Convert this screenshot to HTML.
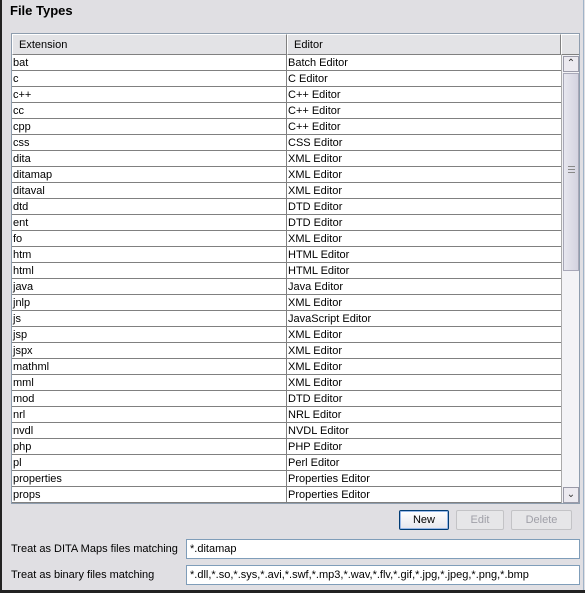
<!DOCTYPE html>
<html><head><style>
*{margin:0;padding:0;box-sizing:border-box}
body{width:585px;height:593px;background:#e0dfe3;font-family:"Liberation Sans",sans-serif;font-size:11px;color:#000;position:relative;overflow:hidden}
.abs{position:absolute}
#lb{left:0;top:0;width:2px;height:593px;background:#222}
#rb{right:1px;top:0;width:1px;height:593px;background:#9fb3c8}
#bb{left:0;bottom:0;width:585px;height:3px;background:#222}
#title{left:10px;top:3px;font-weight:bold;font-size:13px}
#tbl{left:11px;top:33px;width:569px;height:471px;border:1px solid #8e9dae;background:#fff;overflow:hidden}
.hd{position:absolute;top:0;height:21px;background:#e3e3e6;border:1px solid #fff;border-right-color:#808080;border-bottom-color:#808080;padding:4px 0 0 6px}
.row{position:absolute;left:0;width:549px;height:16px;border-bottom:1px solid #808080}
.row span{position:absolute;top:2px}
.c1{left:1px}.c2{left:276px}
.vl{position:absolute;left:274px;top:20px;width:1px;height:450px;background:#808080}
#sb{position:absolute;left:549px;top:21px;width:18px;height:450px;background:#f3f3f6;border-left:1px solid #aaa}
.sbtn{position:absolute;left:1px;width:16px;height:16px;background:#eceaf0;border:1px solid #9a9aa8;font-size:10px;text-align:center;line-height:13px;color:#333}
#thumb{position:absolute;left:1px;top:18px;width:16px;height:198px;background:linear-gradient(90deg,#e7e7ef,#d4d3e0);border:1px solid #a8a8b8}
.btn{position:absolute;top:510px;height:20px;border:1px solid #c3c3c6;background:#e6e6e8;color:#a0a0a8;text-align:center;line-height:18px;border-radius:2px}
.lbl{position:absolute;left:11px}
.tf{position:absolute;left:186px;width:394px;height:20px;background:#fff;border:1px solid #7f9db9;padding:3px 3px;white-space:nowrap;overflow:hidden}
</style></head><body>
<div class="abs" id="lb"></div><div class="abs" id="rb"></div><div class="abs" id="bb"></div>
<div class="abs" id="title">File Types</div>
<div class="abs" id="tbl">
<div class="hd" style="left:0;width:275px">Extension</div>
<div class="hd" style="left:275px;width:274px">Editor</div>
<div class="hd" style="left:549px;width:19px;padding:0"></div>
<div id="rows"></div>
<div class="vl"></div>
<div id="sb">
<div class="sbtn" style="top:1px">&#8963;</div>
<div id="thumb"><div style="position:absolute;left:4px;top:92px;width:7px;height:7px;border-top:1px solid #888;border-bottom:1px solid #888"><div style="margin-top:2px;height:1px;background:#888"></div></div></div>
<div class="sbtn" style="top:432px">&#8964;</div>
</div>
</div>
<div class="btn" style="left:399px;width:50px;border:1px solid #003c74;background:linear-gradient(#fff,#e6e6ec);color:#000;box-shadow:inset 0 0 0 1px #98b8e8">New</div>
<div class="btn" style="left:456px;width:48px">Edit</div>
<div class="btn" style="left:511px;width:61px">Delete</div>
<div class="lbl" style="top:543px">Treat as DITA Maps files matching</div>
<div class="tf" style="top:539px">*.ditamap</div>
<div class="lbl" style="top:569px">Treat as binary files matching</div>
<div class="tf" style="top:565px">*.dll,*.so,*.sys,*.avi,*.swf,*.mp3,*.wav,*.flv,*.gif,*.jpg,*.jpeg,*.png,*.bmp</div>
<script>
var d=[["bat","Batch Editor"],["c","C Editor"],["c++","C++ Editor"],["cc","C++ Editor"],["cpp","C++ Editor"],["css","CSS Editor"],["dita","XML Editor"],["ditamap","XML Editor"],["ditaval","XML Editor"],["dtd","DTD Editor"],["ent","DTD Editor"],["fo","XML Editor"],["htm","HTML Editor"],["html","HTML Editor"],["java","Java Editor"],["jnlp","XML Editor"],["js","JavaScript Editor"],["jsp","XML Editor"],["jspx","XML Editor"],["mathml","XML Editor"],["mml","XML Editor"],["mod","DTD Editor"],["nrl","NRL Editor"],["nvdl","NVDL Editor"],["php","PHP Editor"],["pl","Perl Editor"],["properties","Properties Editor"],["props","Properties Editor"],["py","Python Editor"]];
var h="";d.forEach(function(r,i){h+='<div class="row" style="top:'+(21+i*16)+'px"><span class="c1">'+r[0]+'</span><span class="c2">'+r[1]+'</span></div>'});
document.getElementById("rows").innerHTML=h;
</script>
</body></html>
